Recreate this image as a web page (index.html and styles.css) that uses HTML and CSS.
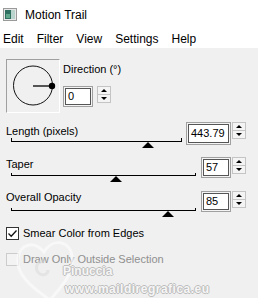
FILE: index.html
```html
<!DOCTYPE html>
<html lang="en">
<head>
    <meta charset="UTF-8">
    <title>Motion Trail</title>
    <link rel="stylesheet" href="styles.css">
</head>
<body>

    <!-- Barra de título -->
    <div class="titlebar">
        <svg class="app-icon" width="14" height="13" viewBox="0 0 14 13">
            <rect x="0.5" y="0.5" width="13" height="12" fill="#e8e8e8" stroke="#9a9a9a"/>
            <rect x="2" y="2" width="6" height="9" fill="#2f6f62"/>
            <rect x="8" y="2" width="4" height="9" fill="#b9d4cc"/>
            <rect x="3" y="6" width="4" height="4" fill="#5fa58a"/>
        </svg>
        <span class="title">Motion Trail</span>
    </div>

    <div class="menubar">
        <span>Edit</span>
        <span>Filter</span>
        <span>View</span>
        <span>Settings</span>
        <span>Help</span>
    </div>

    <div class="dialog">

        <div class="direction">
            <div class="dial">
                <svg width="52" height="52" viewBox="0 0 52 52">
                    <circle cx="26" cy="25.5" r="19.5" fill="none" stroke="#111" stroke-width="1"/>
                    <line x1="26" y1="26" x2="45" y2="26" stroke="#555" stroke-width="2"/>
                    <circle cx="45" cy="26" r="3.2" fill="#000"/>
                </svg>
            </div>
            <div class="direction-controls">
                <div class="label">Direction (°)</div>
                <div class="field-row">
                    <div class="numbox small">0</div>
                    <div class="spinner"><span class="up"></span><span class="down"></span></div>
                </div>
            </div>
        </div>

        <div class="slider-row row-length">
            <div class="slider-col">
                <div class="label">Length (pixels)</div>
                <div class="track"><span class="thumb" style="left: 80.6%"></span></div>
            </div>
            <div class="field-row">
                <div class="numbox wide">443.79</div>
                <div class="spinner"><span class="up"></span><span class="down"></span></div>
            </div>
        </div>

        <div class="slider-row row-taper">
            <div class="slider-col">
                <div class="label">Taper</div>
                <div class="track"><span class="thumb" style="left: 57%"></span></div>
            </div>
            <div class="field-row">
                <div class="numbox">57</div>
                <div class="spinner"><span class="up"></span><span class="down"></span></div>
            </div>
        </div>

        <div class="slider-row row-opacity">
            <div class="slider-col">
                <div class="label">Overall Opacity</div>
                <div class="track"><span class="thumb" style="left: 85%"></span></div>
            </div>
            <div class="field-row">
                <div class="numbox">85</div>
                <div class="spinner"><span class="up"></span><span class="down"></span></div>
            </div>
        </div>

        <div class="check-row first">
            <span class="checkbox">
                <svg width="11" height="11" viewBox="0 0 11 11">
                    <polyline points="1.5,5.5 4.2,8.2 9.5,2.5" fill="none" stroke="#111" stroke-width="1.3"/>
                </svg>
            </span>
            <span>Smear Color from Edges</span>
        </div>

        <div class="check-row disabled">
            <span class="checkbox"></span>
            <span>Draw Only Outside Selection</span>
        </div>
    </div>

    <!-- Marca de agua -->
    <div class="watermark">
        <svg class="heart" width="70" height="70" viewBox="0 0 70 70">
            <path d="M40 66 C20 52 6 40 8 24 C10 10 24 6 34 18 C42 4 60 6 62 22 C64 40 52 52 40 66 Z" fill="none" stroke="#fbfbfb" stroke-width="3" opacity="0.7"/>
            <path d="M34 28 C26 26 24 36 30 40 C34 42 38 40 38 36" fill="none" stroke="#dcdcdc" stroke-width="3" opacity="0.6"/>
        </svg>
        <span class="wm-name">Pinuccia</span>
        <span class="wm-site">www.maildiregrafica.eu</span>
    </div>

</body>
</html>
```

FILE: styles.css
```css
body {
    margin: 0;
    width: 258px;
    height: 298px;
    overflow: hidden;
    background-color: #f0f0f0;
    font-family: "Liberation Sans", Arial, sans-serif;
    font-size: 11px;
    color: #000;
    position: relative;
}

.titlebar {
    height: 29px;
    background-color: #fff;
    display: flex;
    align-items: center;
    padding-left: 3px;
    font-size: 12px;
}
.app-icon { margin-right: 8px; }

.menubar {
    height: 19px;
    background-color: #fff;
    display: flex;
    align-items: center;
    gap: 13px;
    padding-left: 3px;
    font-size: 12px;
}

.dialog { padding: 11px 12px 0 6px; }
.label { height: 13px; line-height: 13px; white-space: nowrap; }

/* Bloque de dirección */
.direction { display: flex; height: 54px; }
.dial {
    width: 54px;
    height: 54px;
    box-sizing: border-box;
    border-top: 1px solid #a0a0a0;
    border-left: 1px solid #a0a0a0;
    border-bottom: 1px solid #fff;
    border-right: 1px solid #fff;
}
.dial svg { display: block; }
.direction-controls { margin-left: 3px; }
.direction-controls .label { margin-top: 4px; }
.direction-controls .field-row { margin-top: 10px; }

.field-row { display: flex; align-items: flex-start; }

.numbox {
    width: 30px;
    height: 21px;
    box-sizing: border-box;
    border: 1px solid #a0a0a0;
    box-shadow: inset 0 0 0 1px #f4f4f4, inset 0 0 0 2px #555;
    background-color: #fff;
    padding-left: 4px;
    line-height: 19px;
}
.numbox.wide { width: 45px; height: 23px; line-height: 21px; }
.numbox.small { height: 21px; }

.spinner {
    width: 14px;
    height: 17px;
    box-sizing: border-box;
    margin-left: 1px;
    border: 1px solid #c4c4c4;
    background-color: #f4f4f4;
    display: flex;
    flex-direction: column;
}
.direction .spinner { margin-left: 4px; }
.spinner span {
    flex: 1;
    display: flex;
    align-items: center;
    justify-content: center;
}
.spinner .up { border-bottom: 1px solid #c4c4c4; }
.spinner .up::after {
    content: "";
    border-left: 3px solid transparent;
    border-right: 3px solid transparent;
    border-bottom: 3px solid #000;
}
.spinner .down::after {
    content: "";
    border-left: 3px solid transparent;
    border-right: 3px solid transparent;
    border-top: 3px solid #000;
}

/* Deslizadores */
.slider-row { display: flex; align-items: flex-start; }
.slider-col { flex: 1; }
.track {
    position: relative;
    margin-left: 5px;
    border-left: 1px solid #000;
    border-right: 1px solid #000;
    border-bottom: 1px solid #000;
}
.thumb {
    position: absolute;
    top: calc(100% + 1px);
    width: 0;
    height: 0;
    margin-left: -6px;
    border-left: 6px solid transparent;
    border-right: 6px solid transparent;
    border-bottom: 6px solid #000;
}

.row-length { margin-top: 9px; }
.row-length .slider-col { padding-top: 3px; }
.row-length .track { height: 3px; margin-right: 4px; }

.row-taper { margin-top: 12px; }
.row-taper .slider-col { padding-top: 1px; }
.row-taper .track { height: 2px; margin-top: 2px; margin-right: 5px; }

.row-opacity { margin-top: 13px; }
.row-opacity .track { height: 2px; margin-top: 4px; margin-right: 5px; }

/* Casillas */
.check-row {
    display: flex;
    align-items: center;
    gap: 4px;
    height: 13px;
    line-height: 11px;
}
.check-row.first { margin-top: 15px; }
.check-row.disabled { margin-top: 13px; color: #8f8f8f; }
.checkbox {
    width: 13px;
    height: 13px;
    box-sizing: border-box;
    border: 1px solid #333;
    background-color: #fff;
    display: flex;
    align-items: center;
    justify-content: center;
}
.disabled .checkbox { border-color: #cccccc; background-color: #f3f3f3; }

.watermark {
    position: absolute;
    left: 0;
    top: 212px;
    width: 258px;
    height: 86px;
    pointer-events: none;
}
.heart { position: absolute; left: 10px; top: 22px; }
.wm-name, .wm-site {
    position: absolute;
    font-weight: bold;
    font-size: 12px;
    line-height: 10px;
    color: #f6f6f6;
    text-shadow: 1px 0 #bdbdbd, -1px 0 #bdbdbd, 0 1px #bdbdbd, 0 -1px #bdbdbd;
    white-space: nowrap;
}
.wm-name { left: 63px; top: 54px; }
.wm-site { left: 65px; top: 72px; letter-spacing: 0.5px; }
```
